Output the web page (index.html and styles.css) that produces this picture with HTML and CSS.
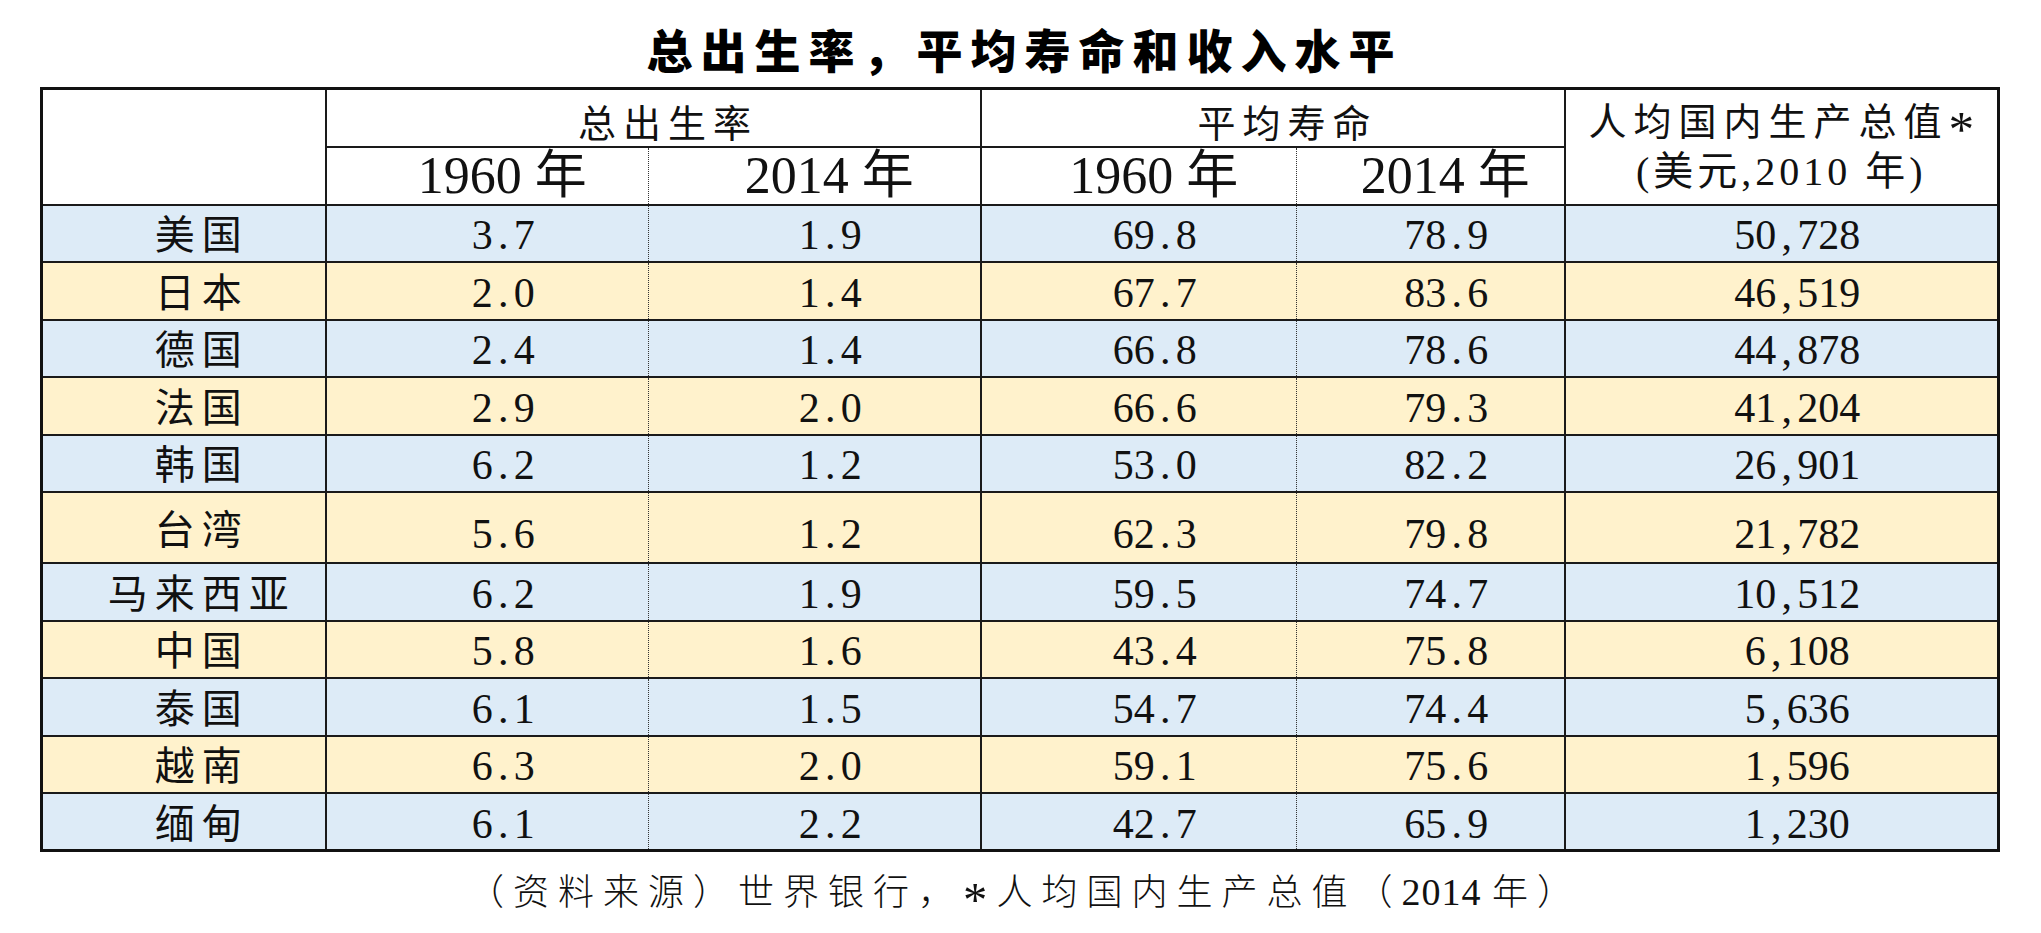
FILE: index.html
```html
<!DOCTYPE html>
<html lang="zh-CN">
<head>
<meta charset="utf-8">
<title>总出生率，平均寿命和收入水平</title>
<link rel="stylesheet" href="styles.css">
</head>
<body>
<h1 class="title">总出生率，平均寿命和收入水平</h1>
<table class="stats">
  <colgroup>
    <col class="c-name"><col class="c-1"><col class="c-2"><col class="c-3"><col class="c-4"><col class="c-5">
  </colgroup>
  <thead>
    <tr class="h1">
      <th rowspan="2" class="blank"></th>
      <th colspan="2" class="grp">总出生率</th>
      <th colspan="2" class="grp">平均寿命</th>
      <th rowspan="2" class="gdp"><div class="gdp-l1">人均国内生产总值<span class="ast">*</span></div><div class="gdp-l2">(美元,2010 年)</div></th>
    </tr>
    <tr class="h2">
      <th class="yr a">1960 年</th>
      <th class="yr b">2014 年</th>
      <th class="yr a">1960 年</th>
      <th class="yr b">2014 年</th>
    </tr>
  </thead>
  <tbody>
    <tr class="blue"><td class="name">美国</td><td class="num a">3<span class="p">.</span>7</td><td class="num b">1<span class="p">.</span>9</td><td class="num a">69<span class="p">.</span>8</td><td class="num b">78<span class="p">.</span>9</td><td class="num">50<span class="p">,</span>728</td></tr>
    <tr class="yellow"><td class="name">日本</td><td class="num a">2<span class="p">.</span>0</td><td class="num b">1<span class="p">.</span>4</td><td class="num a">67<span class="p">.</span>7</td><td class="num b">83<span class="p">.</span>6</td><td class="num">46<span class="p">,</span>519</td></tr>
    <tr class="blue"><td class="name">德国</td><td class="num a">2<span class="p">.</span>4</td><td class="num b">1<span class="p">.</span>4</td><td class="num a">66<span class="p">.</span>8</td><td class="num b">78<span class="p">.</span>6</td><td class="num">44<span class="p">,</span>878</td></tr>
    <tr class="yellow"><td class="name">法国</td><td class="num a">2<span class="p">.</span>9</td><td class="num b">2<span class="p">.</span>0</td><td class="num a">66<span class="p">.</span>6</td><td class="num b">79<span class="p">.</span>3</td><td class="num">41<span class="p">,</span>204</td></tr>
    <tr class="blue"><td class="name">韩国</td><td class="num a">6<span class="p">.</span>2</td><td class="num b">1<span class="p">.</span>2</td><td class="num a">53<span class="p">.</span>0</td><td class="num b">82<span class="p">.</span>2</td><td class="num">26<span class="p">,</span>901</td></tr>
    <tr class="yellow tall"><td class="name">台湾</td><td class="num a">5<span class="p">.</span>6</td><td class="num b">1<span class="p">.</span>2</td><td class="num a">62<span class="p">.</span>3</td><td class="num b">79<span class="p">.</span>8</td><td class="num">21<span class="p">,</span>782</td></tr>
    <tr class="blue"><td class="name">马来西亚</td><td class="num a">6<span class="p">.</span>2</td><td class="num b">1<span class="p">.</span>9</td><td class="num a">59<span class="p">.</span>5</td><td class="num b">74<span class="p">.</span>7</td><td class="num">10<span class="p">,</span>512</td></tr>
    <tr class="yellow"><td class="name">中国</td><td class="num a">5<span class="p">.</span>8</td><td class="num b">1<span class="p">.</span>6</td><td class="num a">43<span class="p">.</span>4</td><td class="num b">75<span class="p">.</span>8</td><td class="num">6<span class="p">,</span>108</td></tr>
    <tr class="blue"><td class="name">泰国</td><td class="num a">6<span class="p">.</span>1</td><td class="num b">1<span class="p">.</span>5</td><td class="num a">54<span class="p">.</span>7</td><td class="num b">74<span class="p">.</span>4</td><td class="num">5<span class="p">,</span>636</td></tr>
    <tr class="yellow"><td class="name">越南</td><td class="num a">6<span class="p">.</span>3</td><td class="num b">2<span class="p">.</span>0</td><td class="num a">59<span class="p">.</span>1</td><td class="num b">75<span class="p">.</span>6</td><td class="num">1<span class="p">,</span>596</td></tr>
    <tr class="blue"><td class="name">缅甸</td><td class="num a">6<span class="p">.</span>1</td><td class="num b">2<span class="p">.</span>2</td><td class="num a">42<span class="p">.</span>7</td><td class="num b">65<span class="p">.</span>9</td><td class="num">1<span class="p">,</span>230</td></tr>
  </tbody>
</table>
<p class="source">（资料来源）世界银行，<span class="ast">*</span>人均国内生产总值（<span class="src-yr">2014 </span>年）</p>
</body>
</html>
```
FILE: styles.css
```css
html, body {
  margin: 0;
  padding: 0;
  background: #ffffff;
  color: #111111;
  font-family: "Liberation Serif", "Noto Sans CJK SC", serif;
}

.title {
  margin: 0;
  height: 87px;
  box-sizing: border-box;
  padding-top: 10px;
  padding-left: 8px;
  line-height: 77px;
  text-align: center;
  font-family: "Noto Sans CJK SC", sans-serif;
  font-weight: 900;
  font-size: 46px;
  letter-spacing: 8px;
  color: #000000;
}

.stats {
  margin-left: 40px;
  width: 1957px;
  border-collapse: collapse;
  table-layout: fixed;
  border: 3px solid #111111;
}

.c-name { width: 284px; }
.c-1 { width: 323px; }
.c-2 { width: 332px; }
.c-3 { width: 316px; }
.c-4 { width: 268px; }
.c-5 { width: 434px; }

.stats th,
.stats td {
  box-sizing: border-box;
  border: 2px solid #1a1a1a;
  padding: 0;
  text-align: center;
  font-weight: normal;
  white-space: nowrap;
  line-height: 40px;
}

.stats .a { border-right: 1px dotted #333333; }
.stats .b { border-left: 1px dotted #333333; }

.h1 th { height: 58px; }
.h2 th { height: 58px; }

.grp {
  font-family: "Noto Sans CJK SC", sans-serif;
  font-weight: 300;
  font-size: 38px;
  letter-spacing: 7px;
  padding-left: 30px !important;
  padding-top: 6px !important;
}

.yr {
  font-size: 52px;
  padding-left: 30px !important;
}

.gdp {
  font-weight: 300;
}

.gdp-l1 {
  font-size: 38px;
  letter-spacing: 7px;
  padding-left: 7px;
  line-height: 50px;
}

.gdp-l2 {
  font-size: 40px;
  letter-spacing: 4px;
  line-height: 50px;
}

.ast {
  font-family: "Liberation Serif", serif;
  font-size: 1.35em;
  line-height: 0;
  vertical-align: -0.22em;
}

.stats tbody td { height: 57.5px; }
.stats tbody tr.tall td { height: 71px; }

.blue td { background: #ddebf7; }
.yellow td { background: #fff2cc; }

.name {
  font-family: "Noto Sans CJK SC", sans-serif;
  font-weight: 300;
  font-size: 40px;
  letter-spacing: 7px;
  padding-left: 36px !important;
  padding-bottom: 2px !important;
}

.num {
  font-size: 42px;
  padding-left: 32px !important;
  padding-top: 4px !important;
}

.tall .num {
  vertical-align: bottom;
  padding-top: 0 !important;
  padding-bottom: 8px !important;
}

.p {
  display: inline-block;
  width: 21px;
  text-align: center;
}

.source {
  margin: 0;
  padding-top: 12px;
  padding-left: 9px;
  line-height: 50px;
  text-align: center;
  font-family: "Noto Sans CJK SC", sans-serif;
  font-weight: 300;
  font-size: 36px;
  letter-spacing: 9px;
}

.src-yr {
  font-family: "Liberation Serif", serif;
  font-size: 38px;
  letter-spacing: 1px;
}
```
